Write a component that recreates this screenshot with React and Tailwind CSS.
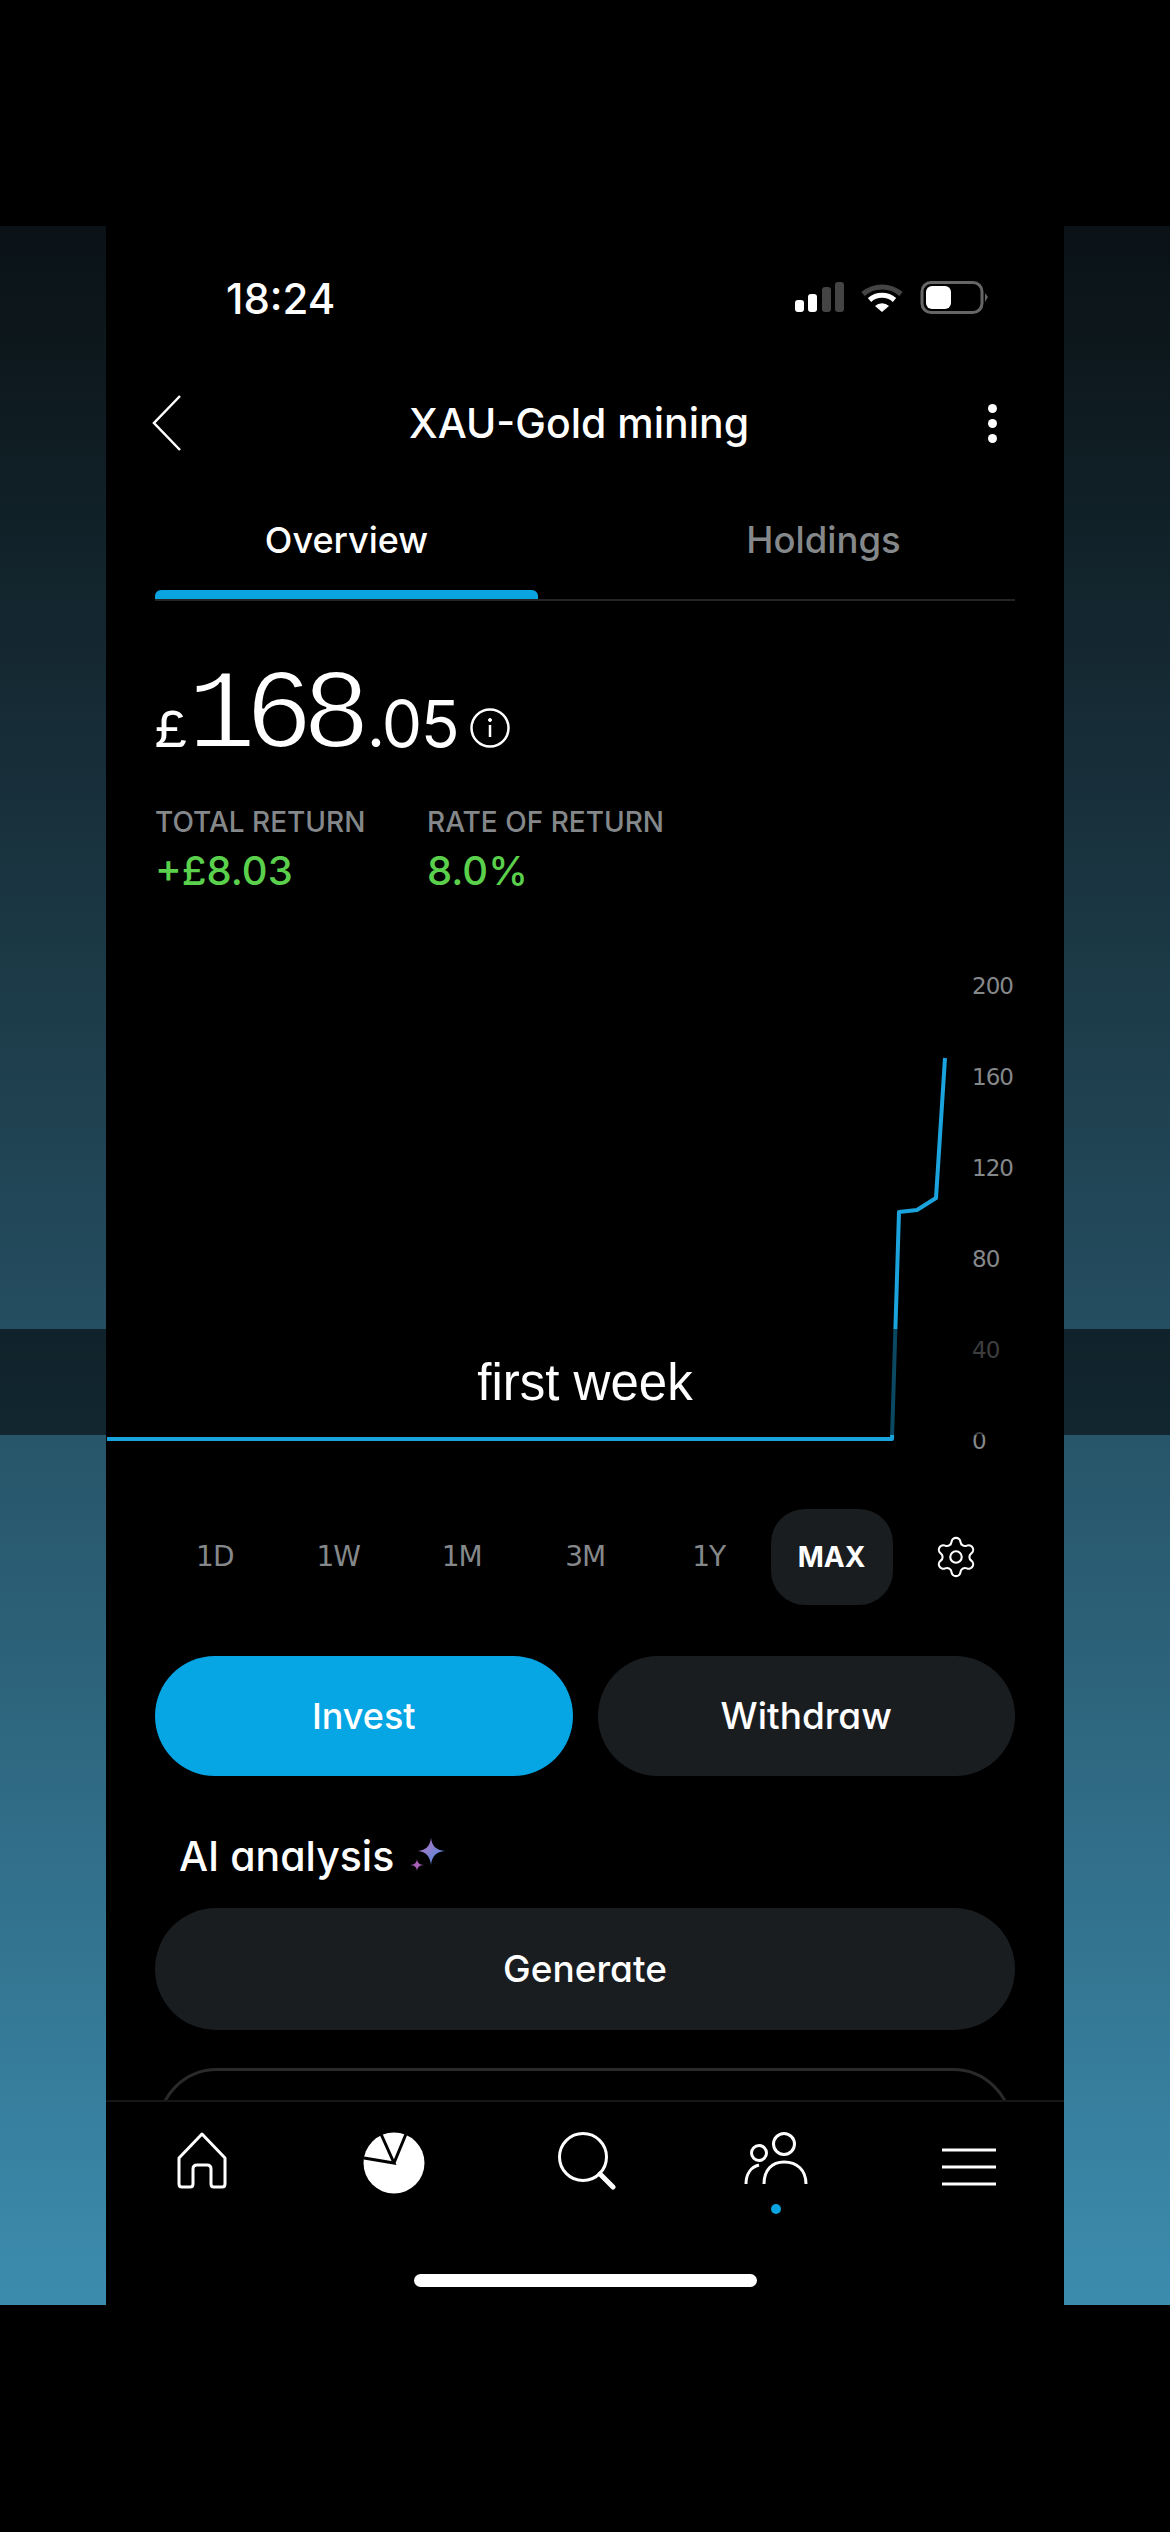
import React from 'react';
import { Settings } from 'lucide-react';

const linePoints = '1,1438 786,1438 793,1211 811,1209 830,1197 839,1057';
const axis = ['200', '160', '120', '80', '40', '0'];
const ranges = ['1D', '1W', '1M', '3M', '1Y'];

const StatusIcons = () => (
    <svg width="193" height="34" viewBox="0 0 193 34" fill="none">
        <rect x="0" y="19" width="9" height="12" rx="3" fill="#fff" />
        <rect x="13" y="13" width="9" height="18" rx="3" fill="#fff" />
        <rect x="27" y="6" width="9" height="25" rx="3" fill="#444" />
        <rect x="40" y="1" width="9" height="30" rx="3" fill="#444" />
        <path d="M68 13 A 29 29 0 0 1 106 13" stroke="#444" strokeWidth="5" />
        <path d="M74.500 19 A 19 19 0 0 1 99.500 19" stroke="#fff" strokeWidth="5" />
        <path d="M80 25 A 10 10 0 0 1 94 25 L87 31 Z" fill="#fff" />
        <rect x="127" y="1.500" width="60" height="30" rx="9" stroke="#666" strokeWidth="3" />
        <rect x="131" y="5" width="25" height="23" rx="6" fill="#fff" />
        <path d="M190 12 L193 16 L190 21 Z" fill="#666" />
    </svg>
);

const Sparkles = () => (
    <svg width="36" height="36" viewBox="0 0 36 36">
        <defs>
            <linearGradient id="spark" x1="0" y1="0" x2="1" y2="1">
                <stop offset="0%" stopColor="#c070c0" />
                <stop offset="100%" stopColor="#3f8fe0" />
            </linearGradient>
        </defs>
        <path d="M21 0 C22 8 26 12 35 13 C26 14 22 18 21 27 C20 18 16 14 8 13 C16 12 20 8 21 0 Z" fill="url(#spark)" />
        <path d="M7 21 C7.500 25 9 26.500 14 27 C9 27.500 7.500 29 7 33 C6.500 29 5 27.500 0 27 C5 26.500 6.500 25 7 21 Z" fill="#a860b8" />
    </svg>
);

const HomeIcon = () => (
    <svg width="50" height="58" viewBox="0 0 50 58" fill="none" stroke="#fff" strokeWidth="3" strokeLinejoin="round">
        <path d="M25 2 L48 26 V52 Q48 55 45 55 H37 Q34 55 34 52 V37 Q34 33 30 33 H20 Q16 33 16 37 V52 Q16 55 13 55 H5 Q2 55 2 52 V26 Z" />
    </svg>
);

const PieIcon = () => (
    <svg width="62" height="62" viewBox="0 0 62 62">
        <circle cx="31" cy="31" r="30.500" fill="#fff" />
        <path d="M1 26 L31 31 L18 2 M31 31 L43 2" stroke="#000" strokeWidth="3" fill="none" />
    </svg>
);

const SearchIcon = () => (
    <svg width="58" height="58" viewBox="0 0 58 58" fill="none" stroke="#fff">
        <circle cx="25" cy="25" r="23.500" strokeWidth="3" />
        <path d="M42 42 L55 55" strokeWidth="5" strokeLinecap="round" />
    </svg>
);

const PeopleIcon = () => (
    <svg width="64" height="54" viewBox="0 0 64 54" fill="none" stroke="#fff" strokeWidth="3">
        <circle cx="40" cy="12" r="10.500" />
        <circle cx="15" cy="21" r="7.500" />
        <path d="M20 52 C20 38 28 30 40 30 C53 30 62 38 62 52" />
        <path d="M2 52 C2 42 7 35 15 33" />
    </svg>
);

const MenuIcon = () => (
    <svg width="54" height="40" viewBox="0 0 54 40" stroke="#fff" strokeWidth="3">
        <path d="M0 3 H54 M0 20 H54 M0 37 H54" />
    </svg>
);

const App = () => {
    return (
        <div className="relative w-[1170px] h-[2532px] bg-black flex flex-col overflow-hidden text-white font-['Inter',sans-serif] [font-feature-settings:'cv11']">
            <div className="h-[226px] shrink-0" />
            <div className="flex h-[2079px] shrink-0">
                <div className="w-[106px] bg-gradient-to-b from-[#0a1216] to-[#3c8cae]" />

                <div className="w-[958px] bg-black flex flex-col">
                    {/* status bar */}
                    <div className="h-[144px] flex items-center justify-between pl-[120px] pr-[76px]">
                        <span className="text-[42px] font-medium">18:24</span>
                        <StatusIcons />
                    </div>

                    {/* header */}
                    <div className="h-[106px] flex items-center justify-between pl-[46px] pr-[67px]">
                        <svg width="30" height="56" viewBox="0 0 30 56" fill="none" stroke="#fff" strokeWidth="2.500">
                            <path d="M28 1 L2 28 L28 55" />
                        </svg>
                        <span className="text-[41px] font-medium leading-none mr-[12px]">XAU-Gold mining</span>
                        <div className="flex flex-col gap-[6px]">
                            <span className="w-[9px] h-[9px] rounded-full bg-white" />
                            <span className="w-[9px] h-[9px] rounded-full bg-white" />
                            <span className="w-[9px] h-[9px] rounded-full bg-white" />
                        </div>
                    </div>

                    {/* tabs */}
                    <div className="mx-[49px] flex justify-between border-b-2 border-[#242424]">
                        <div className="w-[383px] flex flex-col items-center">
                            <span className="h-[114px] pt-[14px] flex items-center text-[36px] font-medium">Overview</span>
                            <span className="w-full h-[9px] bg-[#0aa5e0] rounded-t-md" />
                        </div>
                        <div className="w-[383px] flex flex-col items-center">
                            <span className="h-[114px] pt-[14px] flex items-center text-[36.500px] font-medium text-[#85888a]">Holdings</span>
                            <span className="h-[9px]" />
                        </div>
                    </div>

                    {/* balance */}
                    <div className="mx-[49px] mt-[66px] flex items-baseline h-[100px]">
                        <span className="text-[54px] leading-none font-['Liberation_Mono',monospace]">£</span>
                        <span className="text-[114px] leading-[100px] tracking-[-11px] font-['Liberation_Mono',monospace] [-webkit-text-stroke:2px_black]">168</span>
                        <span className="text-[64px] leading-none ml-[7px] tracking-tight">.05</span>
                        <svg className="ml-[12px] self-center mt-[22px]" width="40" height="40" viewBox="0 0 40 40" fill="none" stroke="#fff">
                            <circle cx="20" cy="20" r="18.500" strokeWidth="2.500" />
                            <path d="M20 17 V29" strokeWidth="2.500" />
                            <circle cx="20" cy="12" r="1.500" fill="#fff" strokeWidth="1" />
                        </svg>
                    </div>

                    <div className="mx-[49px] mt-[37px] flex">
                        <div className="flex flex-col w-[272px]">
                            <span className="text-[28px] leading-[36px] font-medium text-[#85888a]">TOTAL RETURN</span>
                            <span className="text-[40px] leading-[50px] font-medium text-[#5ad04c] mt-[6px]">+£8.03</span>
                        </div>
                        <div className="flex flex-col">
                            <span className="text-[28px] leading-[36px] font-medium text-[#85888a]">RATE OF RETURN</span>
                            <span className="text-[40px] leading-[50px] font-medium text-[#5ad04c] mt-[6px]">8.0%</span>
                        </div>
                    </div>

                    {/* chart */}
                    <div className="mt-[73px] h-[489px] flex">
                        <svg className="w-[866px] h-[486px] shrink-0" viewBox="0 968 866 486" fill="none">
                            <polyline points={linePoints} stroke="#1aa3dc" strokeWidth="4" strokeLinejoin="round" />
                        </svg>
                        <div className="flex flex-col justify-between font-['DejaVu_Sans',sans-serif] text-[23px] leading-[34px] text-[#85888a] tracking-[-1px]">
                            {axis.map(label => (
                                <span key={label}>{label}</span>
                            ))}
                        </div>
                    </div>

                    {/* range selector */}
                    <div className="mt-[51px] ml-[47px] flex items-center h-[96px]">
                        {ranges.map(range => (
                            <span key={range} className="w-[123.500px] text-center text-[28px] text-[#85888a] font-['DejaVu_Sans',sans-serif] tracking-[-1px]">{range}</span>
                        ))}
                        <span className="w-[122px] h-[96px] rounded-[34px] bg-[#1a1d1f] flex items-center justify-center text-[28px] font-bold">MAX</span>
                        <Settings className="ml-[40px]" size={46} strokeWidth={1.1} />
                    </div>

                    {/* actions */}
                    <div className="mx-[49px] mt-[51px] flex gap-[25px]">
                        <button className="flex-1 h-[120px] rounded-full bg-[#06a5e3] text-[36px] font-medium">Invest</button>
                        <button className="flex-1 h-[120px] rounded-full bg-[#1a1d20] text-[37px] font-medium">Withdraw</button>
                    </div>

                    <div className="mt-[54px] ml-[73px] flex items-center gap-[16px] h-[52px]">
                        <span className="text-[41px] font-medium leading-none">AI analysis</span>
                        <Sparkles />
                    </div>

                    <button className="mx-[49px] mt-[26px] h-[122px] rounded-full bg-[#1a1d20] text-[37px] font-medium shrink-0">Generate</button>

                    {/* next card, cut by the nav */}
                    <div className="mx-[51px] mt-[38px] h-[32px] overflow-hidden shrink-0">
                        <div className="h-[120px] rounded-[60px] border-[3px] border-[#2a2a2a]" />
                    </div>

                    {/* bottom nav */}
                    <div className="flex-1 border-t-[2px] border-[#161616] flex flex-col">
                        <div className="h-[120px] flex items-start pl-[71px] pt-[30px]">
                            <HomeIcon />
                            <div className="ml-[136px]"><PieIcon /></div>
                            <div className="ml-[133px]"><SearchIcon /></div>
                            <div className="ml-[128px] flex flex-col items-center">
                                <PeopleIcon />
                                <span className="w-[10px] h-[10px] rounded-full bg-[#0aa5e0] mt-[18px]" />
                            </div>
                            <div className="ml-[134px] pt-[15px]"><MenuIcon /></div>
                        </div>
                        <div className="mt-[52px] mx-auto w-[343px] h-[13px] rounded-full bg-white" />
                    </div>
                </div>

                <div className="w-[106px] bg-gradient-to-b from-[#0a1216] to-[#3c8cae]" />
            </div>
            <div className="flex-1" />

            {/* caption band laid over the recording */}
            <div className="absolute inset-x-0 top-[1329px] h-[106px] bg-black/55 flex items-center justify-center">
                <span className="text-[51px] leading-none font-['Liberation_Sans',sans-serif] [font-feature-settings:normal]">first week</span>
            </div>
        </div>
    );
};

export default App;
